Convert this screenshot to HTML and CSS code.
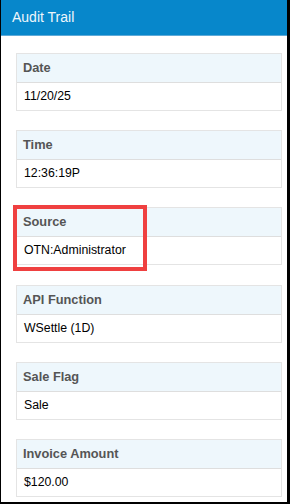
FILE: index.html
```html
<!DOCTYPE html>
<html lang="en">
<head>
  <meta charset="UTF-8" />
  <meta name="viewport" content="width=device-width, initial-scale=1.0"/>
  <title>Audit Trail</title>
  <link rel="stylesheet" href="styles.css">
</head>
<body>
  <div class="frame">
    <div class="header">Audit Trail</div>

    <div class="content">
      <div class="field">
        <div class="label">Date</div>
        <div class="value">11/20/25</div>
      </div>

      <div class="field">
        <div class="label">Time</div>
        <div class="value">12:36:19P</div>
      </div>

      <div class="field highlighted">
        <div class="label">Source</div>
        <div class="value">OTN:Administrator</div>
        <div class="mark"></div>
      </div>

      <div class="field">
        <div class="label">API Function</div>
        <div class="value">WSettle (1D)</div>
      </div>

      <div class="field">
        <div class="label">Sale Flag</div>
        <div class="value">Sale</div>
      </div>

      <div class="field">
        <div class="label">Invoice Amount</div>
        <div class="value">$120.00</div>
      </div>
    </div>
  </div>
</body>
</html>
```

FILE: styles.css
```css
html, body {
  margin: 0;
  padding: 0;
}
body {
  font-family: "Liberation Sans", Arial, sans-serif;
  background: #fff;
}
.frame {
  box-sizing: border-box;
  width: 290px;
  height: 504px;
  border-left: 1px solid #000;
  border-right: 3px solid #000;
  border-bottom: 2px solid #000;
  overflow: hidden;
}
.header {
  height: 35px;
  line-height: 35px;
  padding-left: 11px;
  background-color: #0787cb;
  border-bottom: 1px solid #5eaad8;
  color: #eef6fb;
  font-size: 14px;
}
.content {
  padding: 17px 5px 0 15px;
}
.field {
  position: relative;
  border: 1px solid #e4e4e4;
  margin-bottom: 19.2px;
}
.label {
  height: 28px;
  line-height: 28px;
  padding-left: 6px;
  background-color: #eef7fc;
  border-bottom: 1px solid #dedede;
  color: #555;
  font-size: 12.8px;
  font-weight: bold;
}
.value {
  height: 27px;
  line-height: 27px;
  padding-left: 7px;
  color: #000;
  font-size: 12.3px;
}
.mark {
  position: absolute;
  left: -4px;
  top: -3px;
  width: 126px;
  height: 58px;
  border: 4px solid #ef4040;
}
```
